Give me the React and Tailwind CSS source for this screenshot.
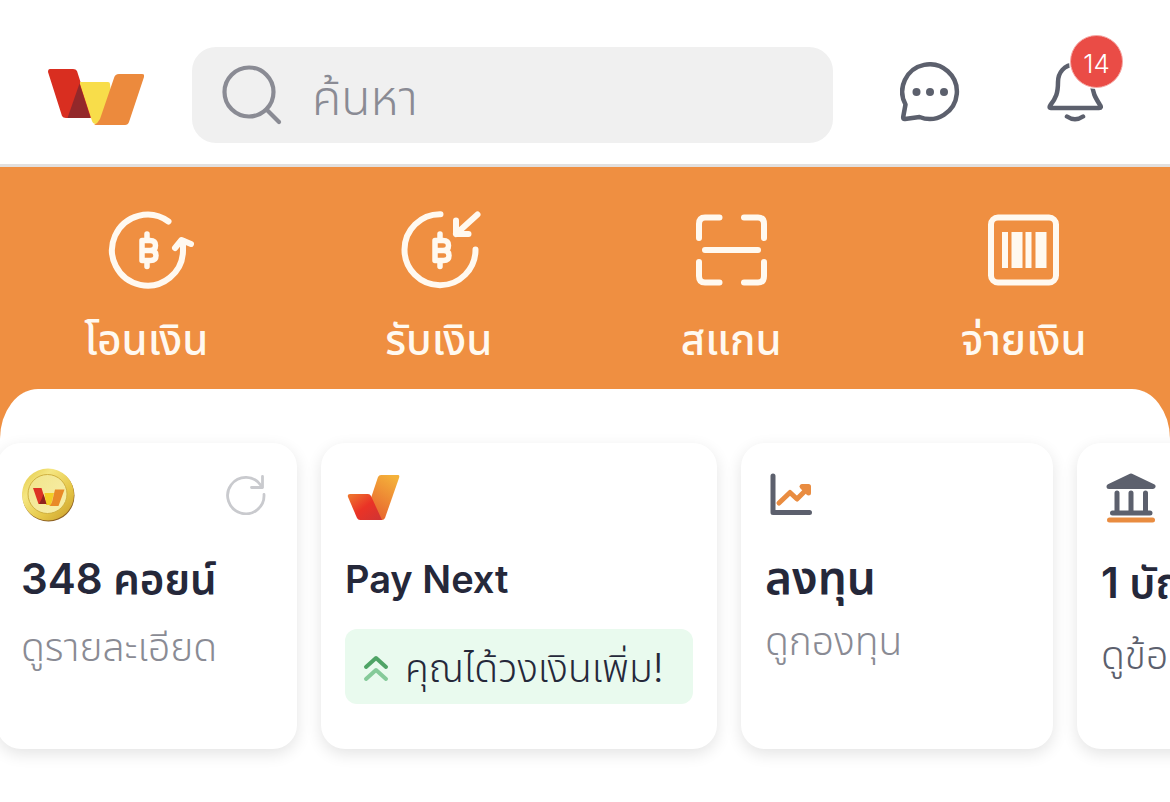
import React from "react";

function BrandMark({ className }) {
  return (
    <svg viewBox="0 0 96 56" className={className} aria-hidden="true">
      <path d="M2 0H25Q28 0 29 2L43 46Q44 49 42 49H18Q15 49 14 47L0 3Q0 0 2 0Z" fill="#d92e20" />
      <path d="M32 13H60Q62 13 62 15L66 55H48Q45 55 44 52L32 15Z" fill="#f8dd4a" />
      <path d="M31.500 14.500L42.500 49H19.500Z" fill="#93282a" />
      <path d="M71 5H94Q97 5 96 8L81 53Q80 56 77 56H46Q50 54 52 50L66 9Q67 5 71 5Z" fill="#ec8a3d" />
    </svg>
  );
}

function BahtGlyph() {
  return (
    <g strokeWidth="5.5">
      <path d="M36 30.500H44Q49.500 30.500 49.500 35.500T44 40.500H36ZM36 40.500H45Q50 40.500 50 45.500T44.500 50.500H36Z" />
      <path d="M41 24V30M41 51V56.500" />
    </g>
  );
}

function TransferIcon() {
  return (
    <svg viewBox="0 0 88 80" className="h-20 w-22 translate-x-1" fill="none" stroke="#fff9f0" strokeWidth="6" strokeLinecap="round" strokeLinejoin="round" aria-hidden="true">
      <path d="M62.500 11.500A35.500 35.500 0 1 0 77 40V31" />
      <path d="M69 38L75.500 30L85 34" />
      <BahtGlyph />
    </svg>
  );
}

function ReceiveIcon() {
  return (
    <svg viewBox="0 0 88 80" className="h-20 w-22 translate-x-1" fill="none" stroke="#fff9f0" strokeWidth="6" strokeLinecap="round" strokeLinejoin="round" aria-hidden="true">
      <path d="M41.500 4.200A35.500 35.500 0 1 0 76.500 39.500" />
      <path d="M78.500 4.500L57 24M57 10.500V24H69.500" />
      <BahtGlyph />
    </svg>
  );
}

function ScanIcon() {
  return (
    <svg viewBox="0 0 80 80" className="size-20" fill="none" stroke="#fff9f0" strokeWidth="6" strokeLinecap="round" strokeLinejoin="round" aria-hidden="true">
      <path d="M28.500 7.500H14Q8 7.500 8 14V28M53 7.500H67Q73 7.500 73 14V28M28.500 72.500H14Q8 72.500 8 66V52M53 72.500H67Q73 72.500 73 66V52M14 40H67" />
    </svg>
  );
}

function BarcodeIcon() {
  return (
    <svg viewBox="0 0 80 80" className="size-20" aria-hidden="true">
      <rect x="7" y="7.500" width="65" height="65" rx="7" fill="none" stroke="#fff9f0" strokeWidth="6" />
      <path d="M18 22h6v36h-6zM27.500 22h11v36h-11zM41.500 22h6v36h-6zM51.500 22h11v36h-11z" fill="#fff9f0" />
    </svg>
  );
}

function ChatIcon() {
  return (
    <svg viewBox="0 0 60 60" className="size-15" fill="none" stroke="#5c606d" strokeWidth="4.500" strokeLinejoin="round" aria-hidden="true">
      <path d="M5.500 42.500A27.300 27.300 0 1 1 19.500 55L5 57Q3 57.300 3.200 55Z" />
      <g fill="#5c606d" stroke="none">
        <circle cx="16.500" cy="30" r="4" />
        <circle cx="30" cy="30" r="4" />
        <circle cx="44" cy="30" r="4" />
      </g>
    </svg>
  );
}

function BellIcon() {
  return (
    <svg viewBox="0 0 56 60" className="h-15 w-14" fill="none" stroke="#5c606d" strokeWidth="4.500" strokeLinecap="round" strokeLinejoin="round" aria-hidden="true">
      <path d="M28 2.500C17 2.500 11 11 11 20C11 31 9 36 3.500 43Q1.500 46 4 46H52Q55 46 53 43C48 35 45.500 31 45 20C45 11 39 2.500 28 2.500Z" />
      <path d="M20 54.500Q28 60 36 54.500" />
    </svg>
  );
}

function CoinIcon() {
  return (
    <svg viewBox="0 0 54 54" className="size-[54px]" aria-hidden="true">
      <defs>
        <linearGradient id="rim" x1="0" y1="0" x2="1" y2="1">
          <stop offset="0" stopColor="#e0c53e" />
          <stop offset=".3" stopColor="#f5e681" />
          <stop offset=".65" stopColor="#e6c747" />
          <stop offset="1" stopColor="#c79a2b" />
        </linearGradient>
        <linearGradient id="face" x1="0" y1="0" x2="1" y2="1">
          <stop offset="0" stopColor="#f1e58a" />
          <stop offset="1" stopColor="#f8efad" />
        </linearGradient>
      </defs>
      <circle cx="27.500" cy="27.500" r="26" fill="#8c5f22" />
      <circle cx="27" cy="26.500" r="26" fill="url(#rim)" />
      <circle cx="26.500" cy="26" r="19.500" fill="url(#face)" stroke="#d0b040" strokeWidth="1" />
      <path d="M12 20H20.500L25.500 36H17.500Z" fill="#dc3324" />
      <path d="M23.500 25H33L30 37H25Z" fill="#f3ce25" />
      <path d="M22.500 26L25.500 36H18Q21 31 22.500 26Z" fill="#90241c" />
      <path d="M34 21.500H43.500L37.500 38H28Q30 37 31 34Z" fill="#e98a28" />
    </svg>
  );
}

function RefreshIcon() {
  return (
    <svg viewBox="0 0 40 40" className="size-10" fill="none" stroke="#c9cace" strokeWidth="2.800" strokeLinecap="round" strokeLinejoin="round" aria-hidden="true">
      <path d="M38 19.500A18.200 18.200 0 1 1 35 10.500" />
      <path d="M36.500 1.500V12.500H25.500" />
    </svg>
  );
}

function PayNextIcon() {
  return (
    <svg viewBox="0 0 54 46" className="h-[46px] w-[54px]" aria-hidden="true">
      <defs>
        <linearGradient id="tick" x1=".7" y1="0" x2=".3" y2="1">
          <stop offset="0" stopColor="#f4b13a" />
          <stop offset="1" stopColor="#e8642e" />
        </linearGradient>
        <linearGradient id="fold" x1="0" y1="0" x2="1" y2="1">
          <stop offset="0" stopColor="#ee7a2e" />
          <stop offset=".5" stopColor="#ea3326" />
          <stop offset="1" stopColor="#cf3434" />
        </linearGradient>
      </defs>
      <path d="M34 0H51Q53 0 52 3L38 43Q37 45 35 45H28L24 23L31 2Q32 0 34 0Z" fill="url(#tick)" />
      <path d="M3 19H21Q23 19 24 21L35 45H13Q11 45 10 43L1 22Q0 19 3 19Z" fill="url(#fold)" />
    </svg>
  );
}

function ChartIcon() {
  return (
    <svg viewBox="0 0 44 44" className="size-11" fill="none" strokeLinecap="round" strokeLinejoin="round" aria-hidden="true">
      <path d="M4 3V39.500H40.500" stroke="#5c606d" strokeWidth="5" />
      <path d="M10 30L21 19.500L28 26L37 17" stroke="#e98c40" strokeWidth="5" />
      <path d="M33 13.500H39.500V20Z" fill="#e98c40" stroke="#e98c40" strokeWidth="5" />
    </svg>
  );
}

function BankIcon() {
  return (
    <svg viewBox="0 0 50 50" className="size-[50px]" fill="none" stroke="#5c606d" strokeWidth="5" strokeLinecap="round" strokeLinejoin="round" aria-hidden="true">
      <path d="M25 3L47 13.500H3Z" fill="#5c606d" />
      <path d="M11 20V39M25 20V39M39.500 20V39M6.500 40H44" />
      <path d="M3.500 47H46.500" stroke="#e98c40" />
    </svg>
  );
}

const actions = [
  { label: "โอนเงิน", Icon: TransferIcon },
  { label: "รับเงิน", Icon: ReceiveIcon },
  { label: "สแกน", Icon: ScanIcon },
  { label: "จ่ายเงิน", Icon: BarcodeIcon },
];

function Card({ className, children }) {
  return (
    <article className={`h-[306px] shrink-0 rounded-[24px] bg-white px-6 pt-6 shadow-[0_5px_16px_rgba(0,0,0,0.11)] ${className}`}>
      {children}
    </article>
  );
}

export default function App() {
  return (
    <div className="min-h-screen overflow-hidden bg-white font-['Inter','Noto_Sans_Thai','Noto_Sans',sans-serif]">
      <header className="flex h-[167px] items-start border-b-3 border-[#e2e0df] px-12 pt-[47px]">
        <a href="#home" aria-label="หน้าหลัก" className="mt-[22px] mr-12 shrink-0">
          <BrandMark className="h-14 w-24" />
        </a>
        <label className="flex h-24 min-w-0 flex-1 items-center gap-[30px] rounded-[24px] bg-[#f0f0f0] px-[30px]">
          <svg viewBox="0 0 60 60" className="size-15 shrink-0" fill="none" stroke="#8a8b94" strokeWidth="4.200" strokeLinecap="round" aria-hidden="true">
            <circle cx="27" cy="27" r="24.500" />
            <path d="M45 45L57 57" />
          </svg>
          <input type="search" aria-label="ค้นหา" placeholder="ค้นหา" className="h-full w-full min-w-0 bg-transparent pt-1 text-[48px] font-[350] text-[#8a8b94] outline-none placeholder:text-[#8a8b94]" />
        </label>
        <button type="button" aria-label="ข้อความ" className="mt-[15px] ml-[67px] shrink-0">
          <ChatIcon />
        </button>
        <button type="button" aria-label="การแจ้งเตือน" className="relative mt-[15px] mr-[19px] ml-[87px] shrink-0">
          <BellIcon />
          <span className="absolute -top-[27px] -right-5 flex size-[53px] items-center justify-center rounded-full border border-[#f6aaa6] bg-[#ea4c46] pt-1 text-[26px] font-[350] text-white ring-1 ring-white">14</span>
        </button>
      </header>

      <main className="bg-[#ef8f41]">
        <nav className="grid h-[222px] grid-cols-4 pt-[43px]">
          {actions.map(({ label, Icon }) => (
            <button key={label} type="button" className="flex flex-col items-center gap-5 self-start">
              <Icon />
              <span className="text-[42px] leading-[60px] font-medium text-[#fff9f0]">{label}</span>
            </button>
          ))}
        </nav>

        <section className="rounded-t-[38px_50px] bg-white pt-[54px]">
          <div className="-mt-10 -ml-[3px] flex gap-6 overflow-x-auto pt-10 pb-[53px] [scrollbar-width:none]">
            <Card className="w-[300px]">
              <div className="flex h-14 items-center justify-between pr-[7px]">
                <CoinIcon />
                <button type="button" aria-label="รีเฟรช"><RefreshIcon /></button>
              </div>
              <h2 className="mt-7 text-[42px] leading-[56px] font-semibold whitespace-nowrap text-[#25283a]">348 คอยน์</h2>
              <p className="mt-3 text-[39px] leading-[56px] font-[350] whitespace-nowrap text-[#8a8b94]">ดูรายละเอียด</p>
            </Card>
            <Card className="w-[396px]">
              <div className="flex h-14 items-end pb-[2px] pl-[2px]"><PayNextIcon /></div>
              <h2 className="mt-7 text-[38px] leading-[56px] font-semibold whitespace-nowrap text-[#25283a]">Pay Next</h2>
              <p className="mt-[22px] flex h-[75px] items-center gap-4 rounded-xl bg-[#e9faee] pt-1 pl-[18px] text-[39px] font-[350] whitespace-nowrap text-[#25283a]">
                <svg viewBox="0 0 26 28" className="h-7 w-[26px] shrink-0" fill="none" strokeWidth="4" strokeLinecap="round" strokeLinejoin="round" aria-hidden="true">
                  <path d="M3 12L13 3L23 12" stroke="#4fa466" />
                  <path d="M3 24L13 15L23 24" stroke="#85ca99" />
                </svg>
                คุณได้วงเงินเพิ่ม!
              </p>
            </Card>
            <Card className="w-[312px]">
              <div className="flex h-14 items-center pl-1"><ChartIcon /></div>
              <h2 className="mt-[26px] text-[46px] leading-[56px] font-semibold whitespace-nowrap text-[#25283a]">ลงทุน</h2>
              <p className="mt-2 text-[39px] leading-[56px] font-[350] whitespace-nowrap text-[#8a8b94]">ดูกองทุน</p>
            </Card>
            <Card className="w-[312px]">
              <div className="flex h-14 items-end pl-[5px]"><BankIcon /></div>
              <h2 className="mt-8 text-[42px] leading-[56px] font-semibold whitespace-nowrap text-[#25283a]">1 บัญชี</h2>
              <p className="mt-4 text-[39px] leading-[56px] font-[350] whitespace-nowrap text-[#5c606d]">ดูข้อมูล</p>
            </Card>
          </div>
        </section>
      </main>
    </div>
  );
}
